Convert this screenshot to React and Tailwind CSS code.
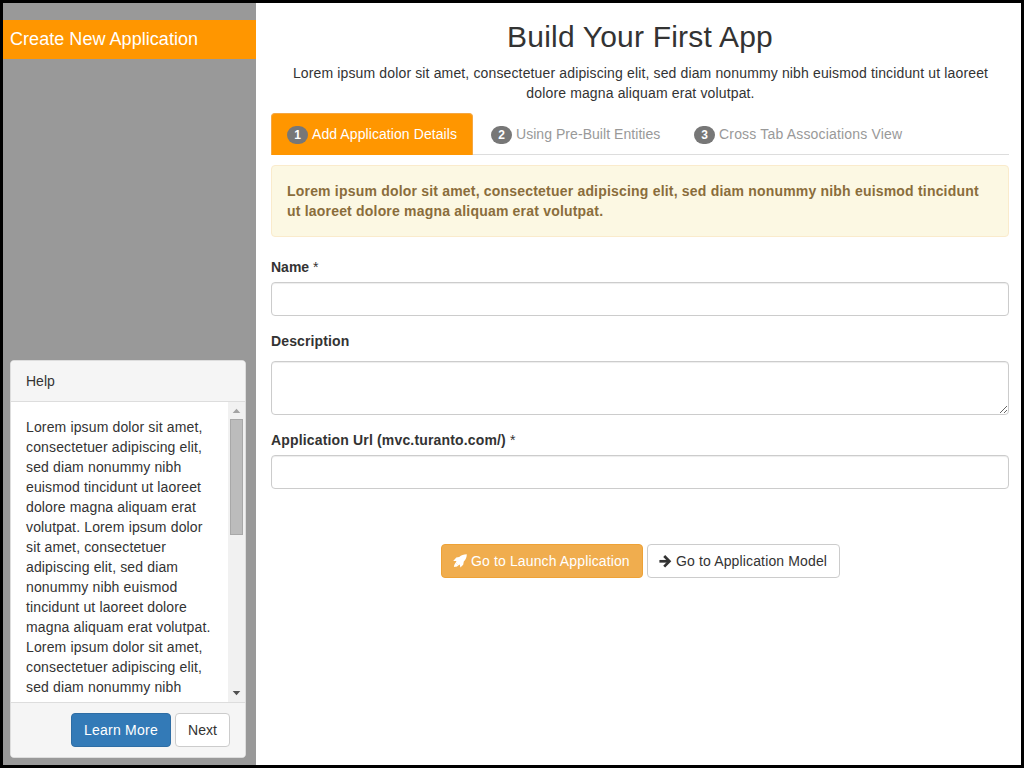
import React from "react";

const helpLines = [
  "Lorem ipsum dolor sit amet,",
  "consectetuer adipiscing elit,",
  "sed diam nonummy nibh",
  "euismod tincidunt ut laoreet",
  "dolore magna aliquam erat",
  "volutpat. Lorem ipsum dolor",
  "sit amet, consectetuer",
  "adipiscing elit, sed diam",
  "nonummy nibh euismod",
  "tincidunt ut laoreet dolore",
  "magna aliquam erat volutpat.",
  "Lorem ipsum dolor sit amet,",
  "consectetuer adipiscing elit,",
  "sed diam nonummy nibh",
];

function RocketIcon() {
  return (
    <svg className="mr-[4px] h-[14px] w-[14px] shrink-0" viewBox="0 0 14 14" fill="currentColor">
      <path d="M13.8 0.2 C10.6 0.2 8.3 1.1 6.2 3 L3.3 3.5 L0.2 6.9 L3.5 7.1 L2.6 8.8 L5.2 11.4 L6.8 10.4 L7.4 13.6 L10.2 10.8 L10.8 7.5 C12.9 5.5 13.7 3.2 13.8 0.2 Z" />
      <path d="M2.6 8.8 L5.2 11.4 C4.2 12.7 2.5 12.6 0.9 13 C1.2 11.5 1.4 9.9 2.6 8.8 Z" />
    </svg>
  );
}

function ArrowIcon() {
  return (
    <svg className="mr-[4px] h-[14px] w-[13px] shrink-0" viewBox="0 0 13 14" fill="none" stroke="currentColor" strokeWidth="2.7">
      <path d="M0.4 7.3 H10" />
      <path d="M5.2 2 L10.4 7.3 L5.2 12.6" />
    </svg>
  );
}

function Sidebar() {
  return (
    <aside className="flex w-[253px] shrink-0 flex-col bg-[#999]">
      <h2 className="mt-[17px] h-[39px] bg-[#ff9600] pl-[7px] text-[18px] leading-[38px] tracking-[0.045px] text-white">
        Create New Application
      </h2>
      <section className="mt-auto mb-[7px] ml-[7px] flex h-[398px] w-[236px] flex-col overflow-hidden rounded-[4px] border border-[#ddd] bg-white">
        <header className="h-[41px] shrink-0 border-b border-[#ddd] bg-[#f5f5f5] pl-[15px] leading-[40px]">
          Help
        </header>
        <div className="flex h-[300px] shrink-0">
          <div className="flex-1 pt-[15px] pl-[15px] tracking-[0.14px] whitespace-nowrap">
            {helpLines.map((line, i) => (
              <div key={i}>{line}</div>
            ))}
          </div>
          <div className="flex w-[17px] flex-col items-center bg-[#f1f1f1]">
            <svg className="h-[17px] w-[17px] shrink-0" viewBox="0 0 17 17">
              <path d="M4.7 11 L8.5 6.8 L12.3 11 Z" fill="#a3a3a3" />
            </svg>
            <div className="h-[116px] w-[13px] border border-[#a8a8a8] bg-[#bcbcbc]" />
            <svg className="mt-auto h-[17px] w-[17px] shrink-0" viewBox="0 0 17 17">
              <path d="M4.7 6 L8.5 10.2 L12.3 6 Z" fill="#505050" />
            </svg>
          </div>
        </div>
        <footer className="flex flex-1 justify-end gap-[4px] border-t border-[#ddd] bg-[#f5f5f5] pt-[10px] pr-[15px]">
          <button className="h-[34px] w-[100px] rounded-[4px] border border-[#2e6da4] bg-[#337ab7] tracking-[0.22px] text-white">
            Learn More
          </button>
          <button className="h-[34px] w-[55px] rounded-[4px] border border-[#ccc] bg-white">
            Next
          </button>
        </footer>
      </section>
    </aside>
  );
}

function Badge({ children }) {
  return (
    <span className="mt-[2px] mr-[4px] flex h-[18px] w-[21px] items-center justify-center rounded-[10px] bg-[#777] text-[12px] leading-none font-bold text-white">
      {children}
    </span>
  );
}

function Tabs() {
  return (
    <nav className="mt-[10px] flex h-[42px] border-b border-[#ddd] text-[#999]">
      <div className="mb-[-1px] flex w-[202px] items-center rounded-t-[4px] border border-b-0 border-[#f5a742] bg-[#ff9600] pb-[2px] pl-[15px] whitespace-nowrap text-white">
        <Badge>1</Badge>
        <span className="tracking-[0.08px]">Add Application Details</span>
      </div>
      <div className="flex w-[203px] items-center pl-[18px] whitespace-nowrap">
        <Badge>2</Badge>
        <span className="tracking-[0.05px]">Using Pre-Built Entities</span>
      </div>
      <div className="flex items-center pl-[18px] whitespace-nowrap">
        <Badge>3</Badge>
        <span className="tracking-[0.18px]">Cross Tab Associations View</span>
      </div>
    </nav>
  );
}

const field =
  "block w-full rounded-[4px] border border-[#ccc] bg-white shadow-[inset_0_1px_1px_rgba(0,0,0,0.075)] outline-none";

export default function App() {
  return (
    <div className="flex h-[768px] w-[1024px] overflow-hidden border-3 border-black bg-white font-['Liberation_Sans',Arial,sans-serif] text-[14px] leading-[20px] text-[#333]">
      <Sidebar />
      <main className="flex w-[765px] flex-col pr-[12px] pl-[15px]">
        <h1 className="mt-[17px] text-center text-[30px] leading-[33px] tracking-[0.2px]">
          Build Your First App
        </h1>
        <p className="mt-[10px] pl-px text-center tracking-[0.14px] whitespace-nowrap">
          Lorem ipsum dolor sit amet, consectetuer adipiscing elit, sed diam nonummy nibh euismod tincidunt ut laoreet
          <br />
          dolore magna aliquam erat volutpat.
        </p>
        <Tabs />
        <div className="mt-[10px] h-[72px] rounded-[4px] border border-[#faebcc] bg-[#fcf8e3] px-[15px] pt-[15px] font-bold tracking-[0.195px] whitespace-nowrap text-[#8a6d3b]">
          Lorem ipsum dolor sit amet, consectetuer adipiscing elit, sed diam nonummy nibh euismod tincidunt
          <br />
          ut laoreet dolore magna aliquam erat volutpat.
        </div>
        <label className="mt-[20px] block">
          <b>Name</b> *
        </label>
        <input className={`${field} mt-[5px] h-[34px] px-3`} />
        <label className="mt-[15px] block font-bold tracking-[0.12px]">Description</label>
        <textarea className={`${field} mt-[10px] h-[54px] resize px-3 py-1.5`} />
        <label className="mt-[15px] block tracking-[0.16px]">
          <b>Application Url (mvc.turanto.com/)</b> *
        </label>
        <input className={`${field} mt-[5px] h-[34px] px-3`} />
        <div className="mt-[55px] flex gap-[4px] pl-[170px] whitespace-nowrap">
          <button className="flex h-[34px] w-[202px] items-center rounded-[4px] border border-[#eea236] bg-[#f0ad4e] pl-[11px] text-white">
            <RocketIcon />
            <span className="tracking-[0.13px]">Go to Launch Application</span>
          </button>
          <button className="flex h-[34px] w-[193px] items-center rounded-[4px] border border-[#ccc] bg-white pl-[11px]">
            <ArrowIcon />
            <span className="tracking-[0.14px]">Go to Application Model</span>
          </button>
        </div>
      </main>
    </div>
  );
}
